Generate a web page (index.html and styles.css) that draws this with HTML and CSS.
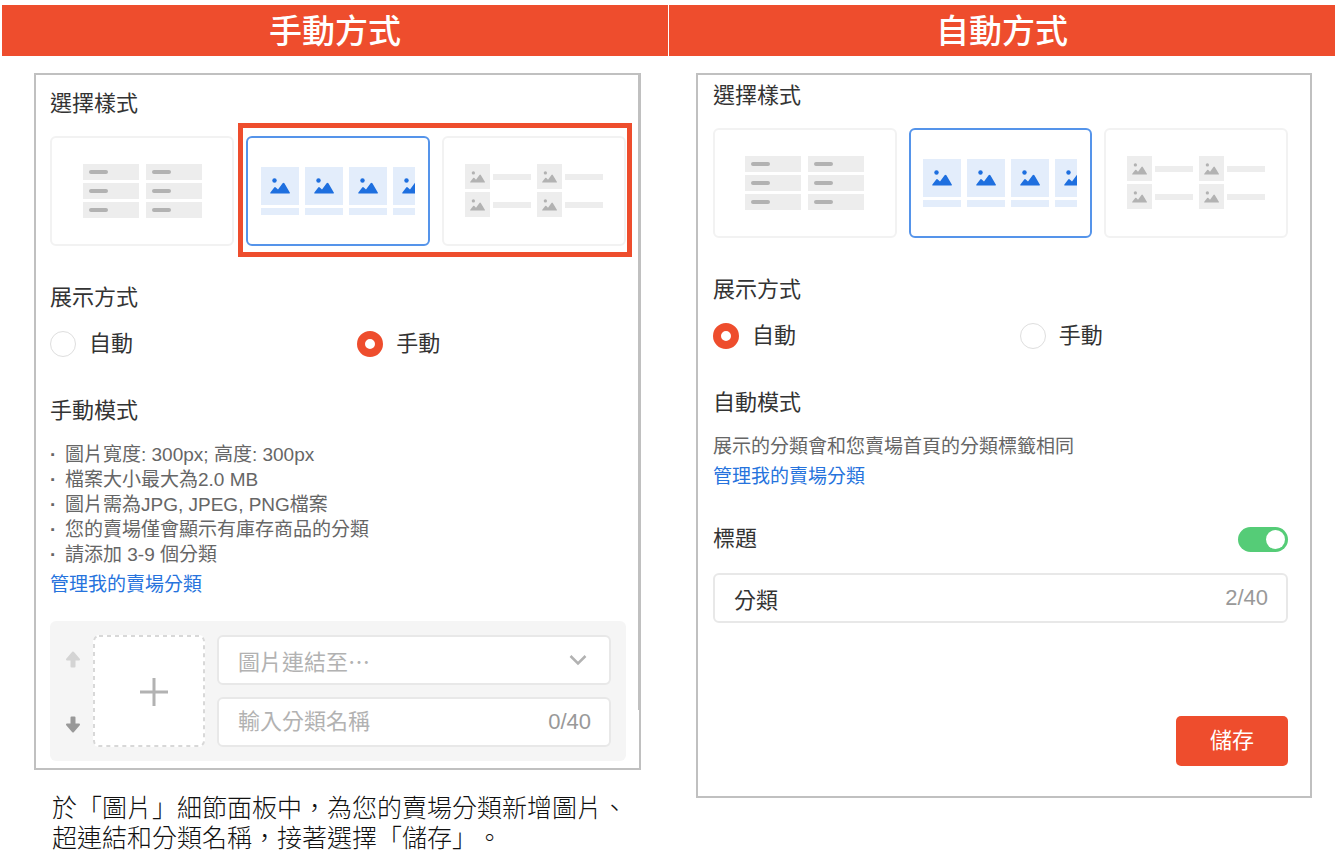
FILE: index.html
```html
<!DOCTYPE html>
<html lang="zh-TW">
<head>
    <meta charset="UTF-8">
    <meta name="viewport" content="width=device-width, initial-scale=1.0">
    <title>圖片分類設定</title>
    <link rel="stylesheet" href="styles.css">
</head>
<body>
    <!-- shared drawings -->
    <svg class="defs" width="0" height="0" aria-hidden="true">
        <symbol id="photo" viewBox="0 0 20 16">
            <circle cx="4.5" cy="2.5" r="2.2"/>
            <path d="M0.6 15.4 Q-0.2 15.4 0.4 14.4 L4.2 9.4 Q5 8.6 5.8 9.4 L8 11.6 L12.6 5.2 Q13.5 4.2 14.4 5.2 L19.8 14.4 Q20.2 15.4 19.4 15.4 Z"/>
        </symbol>
        <symbol id="style-text" viewBox="0 0 119 54">
            <g fill="#ededed">
                <rect width="56" height="16"/><rect x="63" width="56" height="16"/>
                <rect y="19" width="56" height="16"/><rect x="63" y="19" width="56" height="16"/>
                <rect y="38" width="56" height="16"/><rect x="63" y="38" width="56" height="16"/>
            </g>
            <g stroke="#b2b2b2" stroke-width="4" stroke-linecap="round">
                <path d="M8 8H23M71 8H86M8 27H23M71 27H86M8 46H23M71 46H86"/>
            </g>
        </symbol>
        <symbol id="style-image" viewBox="0 0 154 48">
            <g fill="#e3edfb">
                <rect width="38" height="38"/><rect x="44" width="38" height="38"/><rect x="88" width="38" height="38"/><rect x="132" width="22" height="38"/>
                <rect y="41" width="38" height="7"/><rect x="44" y="41" width="38" height="7"/><rect x="88" y="41" width="38" height="7"/><rect x="132" y="41" width="22" height="7"/>
            </g>
            <g fill="#1e6fdf">
                <use href="#photo" x="9" y="11" width="20" height="16"/>
                <use href="#photo" x="53" y="11" width="20" height="16"/>
                <use href="#photo" x="97" y="11" width="20" height="16"/>
                <use href="#photo" x="141" y="11" width="20" height="16"/>
            </g>
        </symbol>
        <symbol id="style-mixed" viewBox="0 0 138 54">
            <g fill="#ededed">
                <rect width="25" height="25"/><rect x="72" width="25" height="25"/>
                <rect y="28" width="25" height="25"/><rect x="72" y="28" width="25" height="25"/>
                <rect x="28" y="10" width="38" height="6"/><rect x="100" y="10" width="38" height="6"/>
                <rect x="28" y="38" width="38" height="6"/><rect x="100" y="38" width="38" height="6"/>
            </g>
            <g fill="#b2b2b2">
                <use href="#photo" x="5" y="7" width="15" height="12"/>
                <use href="#photo" x="77" y="7" width="15" height="12"/>
                <use href="#photo" x="5" y="35" width="15" height="12"/>
                <use href="#photo" x="77" y="35" width="15" height="12"/>
            </g>
        </symbol>
        <symbol id="arrow-up" viewBox="0 0 16 18">
            <path d="M8 1.5 L14 8.5 H2 Z M6.5 8 H9.5 V15.5 H6.5 Z" fill="currentColor" stroke="currentColor" stroke-width="2" stroke-linejoin="round"/>
        </symbol>
    </svg>

    <main class="columns">
        <section class="column">
            <h1>手動方式</h1>
            <div class="panel panel-manual">
                <h2>選擇樣式</h2>
                <div class="styles">
                    <button type="button" class="style-card" aria-label="文字"><svg width="119" height="54"><use href="#style-text"/></svg></button>
                    <button type="button" class="style-card selected" aria-label="圖片"><svg width="154" height="48"><use href="#style-image"/></svg></button>
                    <button type="button" class="style-card" aria-label="圖片和文字"><svg width="138" height="54"><use href="#style-mixed"/></svg></button>
                    <div class="highlight"></div>
                </div>

                <h2>展示方式</h2>
                <div class="options">
                    <label><input type="radio" name="manual-mode">自動</label>
                    <label><input type="radio" name="manual-mode" checked>手動</label>
                </div>

                <h2>手動模式</h2>
                <ul class="notes">
                    <li>圖片寬度: 300px; 高度: 300px</li>
                    <li>檔案大小最大為2.0 MB</li>
                    <li>圖片需為JPG, JPEG, PNG檔案</li>
                    <li>您的賣場僅會顯示有庫存商品的分類</li>
                    <li>請添加 3-9 個分類</li>
                </ul>
                <a class="manage" href="#">管理我的賣場分類</a>

                <div class="item">
                    <div class="move">
                        <button type="button" class="up" aria-label="上移"><svg width="16" height="18"><use href="#arrow-up"/></svg></button>
                        <button type="button" class="down" aria-label="下移"><svg width="16" height="18"><use href="#arrow-up"/></svg></button>
                    </div>
                    <button type="button" class="upload" aria-label="新增圖片">
                        <svg width="112" height="112" viewBox="0 0 112 112" fill="none">
                            <rect x="1" y="1" width="110" height="110" rx="5" stroke="#d8d8d8" stroke-width="2" stroke-dasharray="4 4"/>
                            <path d="M47 57H75M61 43V71" stroke="#b2b2b2" stroke-width="3"/>
                        </svg>
                    </button>
                    <div class="fields">
                        <div class="field">
                            <select aria-label="圖片連結至">
                                <option>圖片連結至…</option>
                            </select>
                            <svg class="chevron" width="18" height="12" viewBox="0 0 18 12"><path d="M1.5 2L9 9.5L16.5 2" fill="none" stroke="#b2b2b2" stroke-width="2.5"/></svg>
                        </div>
                        <div class="field">
                            <input type="text" placeholder="輸入分類名稱" maxlength="40" aria-label="輸入分類名稱">
                            <span class="count">0/40</span>
                        </div>
                    </div>
                </div>
            </div>
            <p class="caption">於「圖片」細節面板中，為您的賣場分類新增圖片、<br>超連結和分類名稱，接著選擇「儲存」。</p>
        </section>

        <section class="column">
            <h1>自動方式</h1>
            <div class="panel panel-auto">
                <h2>選擇樣式</h2>
                <div class="styles">
                    <button type="button" class="style-card" aria-label="文字"><svg width="119" height="54"><use href="#style-text"/></svg></button>
                    <button type="button" class="style-card selected" aria-label="圖片"><svg width="154" height="48"><use href="#style-image"/></svg></button>
                    <button type="button" class="style-card" aria-label="圖片和文字"><svg width="138" height="54"><use href="#style-mixed"/></svg></button>
                </div>

                <h2>展示方式</h2>
                <div class="options">
                    <label><input type="radio" name="auto-mode" checked>自動</label>
                    <label><input type="radio" name="auto-mode">手動</label>
                </div>

                <h2>自動模式</h2>
                <p class="note">展示的分類會和您賣場首頁的分類標籤相同</p>
                <a class="manage" href="#">管理我的賣場分類</a>

                <div class="title-row">
                    <label for="title-switch">標題</label>
                    <input type="checkbox" id="title-switch" class="switch" checked>
                </div>
                <div class="field">
                    <input type="text" value="分類" maxlength="40" aria-label="標題">
                    <span class="count">2/40</span>
                </div>

                <div class="actions">
                    <button type="button" class="save">儲存</button>
                </div>
            </div>
        </section>
    </main>
</body>
</html>
```
FILE: styles.css
```css
* {
    box-sizing: border-box;
}
body {
    margin: 0;
    padding: 5px 5px 0 2px;
    background: #fff;
    color: #333;
    font-family: "Liberation Sans", "Noto Sans CJK TC", sans-serif;
    font-size: 22px;
    line-height: 32px;
}
button, input, select {
    font: inherit;
    color: inherit;
    margin: 0;
}
button {
    padding: 0;
    border: none;
    background: none;
    cursor: pointer;
}
svg {
    display: block;
}
.defs {
    position: absolute;
}
.columns {
    display: grid;
    grid-template-columns: 1fr 1fr;
    gap: 1px;
}
h1 {
    margin: 0 0 17px;
    padding-top: 2px;
    background: #ee4d2d;
    color: #fff;
    font-size: 33px;
    font-weight: 500;
    line-height: 49px;
    text-align: center;
}
h2 {
    margin: 0;
    font-size: 22px;
    font-weight: 400;
    line-height: 34px;
}

/* Panels */
.panel {
    position: relative;
    border: 2px solid #c0c0c0;
}
.panel-manual {
    margin: 0 27px 0 32px;
    padding: 12px 13px 7px 14px;
}
.panel-manual::after {
    content: "";
    position: absolute;
    top: 0;
    right: 0;
    bottom: 58px;
    width: 1px;
    background: #c0c0c0;
}
.panel-auto {
    margin: 0 23px 0 27px;
    padding: 4px 22px 30px 15px;
}

/* Style picker */
.styles {
    position: relative;
    display: grid;
    grid-template-columns: 1fr 1fr 1fr;
    gap: 12px;
    margin: 15px 0 35px;
}
.style-card {
    display: flex;
    justify-content: center;
    align-items: center;
    height: 110px;
    border: 2px solid #f2f2f2;
    border-radius: 6px;
}
.style-card.selected {
    border-color: #5594ea;
}
.highlight {
    position: absolute;
    top: -13px;
    bottom: -11px;
    left: calc(33.333% - 4px);
    right: -6px;
    border: 5px solid #ee4d2d;
    pointer-events: none;
}

/* Radios */
.options {
    display: grid;
    grid-template-columns: 8fr 7fr;
    margin: 13px 0 34px;
}
.options label {
    display: flex;
    align-items: center;
    gap: 13px;
}
.options input {
    appearance: none;
    width: 26px;
    height: 26px;
    border: 1px solid #dedede;
    border-radius: 50%;
    background: #fff;
}
.options input:checked {
    border: 8px solid #ee4d2d;
}

/* Notes */
.notes, .note {
    margin: 14px 0 0;
    padding: 0;
    color: #666;
    font-size: 19px;
    line-height: 25px;
    list-style: none;
}
.notes li {
    display: flex;
}
.notes li::before {
    content: "·";
    flex: none;
    width: 15px;
    font-weight: 700;
}
.manage {
    display: block;
    padding-top: 1px;
    color: #2673dd;
    font-size: 19px;
    line-height: 34px;
    text-decoration: none;
}

/* Category item */
.item {
    display: flex;
    gap: 12px;
    margin-top: 19px;
    padding: 14px 15px;
    border-radius: 6px;
    background: #f5f5f5;
}
.move {
    display: flex;
    flex-direction: column;
    justify-content: space-between;
    padding: 16px 0 14px;
}
.up {
    color: #d4d4d4;
}
.down {
    color: #999;
}
.down svg {
    transform: rotate(180deg);
}
.upload {
    border-radius: 6px;
    background: #fff;
}
.fields {
    flex: 1;
    display: grid;
    gap: 12px;
}
.field {
    display: flex;
    align-items: center;
    height: 50px;
    padding-right: 18px;
    border: 2px solid #e8e8e8;
    border-radius: 6px;
    background: #fff;
}
.field input, .field select {
    flex: 1;
    min-width: 0;
    height: 100%;
    padding: 0 0 0 19px;
    border: none;
    outline: none;
    background: none;
    line-height: 46px;
}
.field select {
    appearance: none;
    padding-bottom: 4px;
    color: #b2b2b2;
    font-family: "Noto Sans CJK TC", sans-serif;
}
.field input::placeholder {
    color: #b2b2b2;
    opacity: 1;
}
.chevron {
    margin-right: 4px;
    pointer-events: none;
}
.count {
    color: #999;
}

/* Title switch */
.title-row {
    display: flex;
    justify-content: space-between;
    align-items: center;
    margin: 29px 0 18px;
}
.switch {
    appearance: none;
    display: flex;
    width: 50px;
    height: 25px;
    padding: 3px;
    border-radius: 13px;
    background: #ccc;
}
.switch::before {
    content: "";
    width: 19px;
    height: 19px;
    border-radius: 50%;
    background: #fff;
}
.switch:checked {
    justify-content: flex-end;
    background: #55cc77;
}
.actions {
    display: flex;
    justify-content: flex-end;
    margin-top: 93px;
}
.save {
    width: 112px;
    height: 50px;
    border-radius: 5px;
    background: #ee4d2d;
    color: #fff;
}

.caption {
    margin: 23px 0 0 50px;
    color: #111;
    font-size: 25px;
    font-weight: 300;
    line-height: 30px;
    white-space: nowrap;
    text-spacing-trim: space-all;
}
```
